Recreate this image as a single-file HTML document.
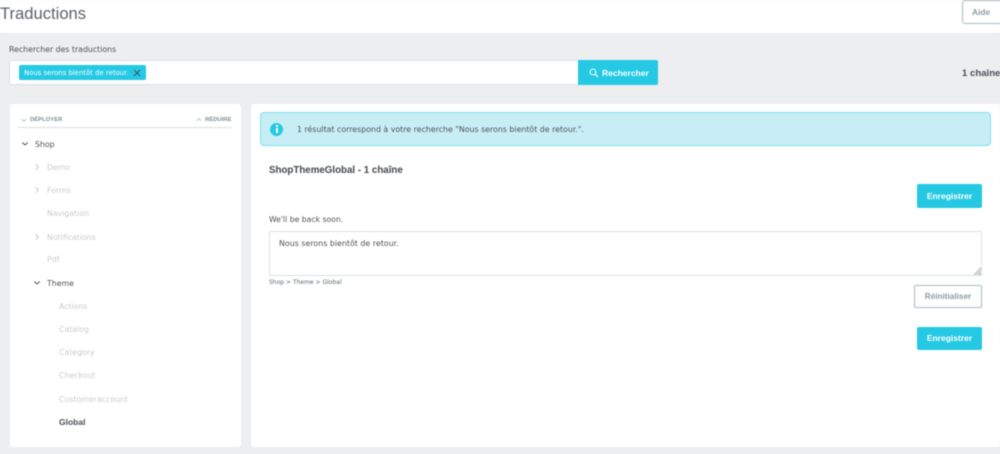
<!DOCTYPE html>
<html lang="fr">
<head>
<meta charset="utf-8">
<title>Traductions</title>
<style>
html,body{margin:0;padding:0}
body{width:1000px;height:454px;overflow:hidden;background:#eceef0;position:relative;font-family:"DejaVu Sans","Liberation Sans",sans-serif;color:#363a41}
div,span,svg{position:absolute;box-sizing:border-box}
.t{white-space:nowrap;line-height:14px;font-size:7.8px}
.b{font-family:"Liberation Sans",sans-serif;font-weight:bold}
.dim{color:#c9cbce}
.btn{background:#25c9e3;border-radius:2px;color:#fff;font-family:"Liberation Sans",sans-serif;font-weight:bold;font-size:8.5px;text-align:center}
#root{left:0;top:0;width:1000px;height:454px;filter:blur(.45px)}
</style>
</head>
<body>
<div id="root">
<div style="left:0;top:0;width:1000px;height:33px;background:#fff"></div>
<div class="t" style="left:0;top:2px;font:16.6px/24px 'Liberation Sans',sans-serif;color:#5c6268">Traductions</div>
<div style="left:962px;top:0;width:46px;height:24px;border:1px solid #a9bbc2;border-radius:3px;background:#fff"></div>
<div class="t b" style="left:972px;top:5px;font-size:8.4px;color:#8a9ca5">Aide</div>

<div class="t" style="left:9px;top:43px;color:#4d5257">Rechercher des traductions</div>
<div style="left:9px;top:60px;width:570px;height:25px;background:#fff;border:1px solid #d8e2e6;border-radius:2px 0 0 2px"></div>
<div style="left:19px;top:65px;width:127px;height:15px;background:#25c9e3;border-radius:2px"></div>
<div class="t" style="left:24px;top:66px;font-size:6.9px;color:#fff">Nous serons bientôt de retour.</div>
<svg style="left:133px;top:69px" width="8" height="8" viewBox="0 0 8 8"><path d="M1 1L7 7M7 1L1 7" stroke="#37525e" stroke-width=".9" fill="none"/></svg>
<div style="left:578px;top:60px;width:80px;height:25px;background:#25c9e3;border-radius:0 2px 2px 0"></div>
<svg style="left:589px;top:68px" width="10" height="10" viewBox="0 0 10 10"><circle cx="4" cy="4" r="2.9" stroke="#fff" stroke-width="1" fill="none"/><path d="M6.2 6.2L9 9" stroke="#fff" stroke-width="1.2"/></svg>
<div class="t b" style="left:602px;top:66px;font-size:8.5px;color:#fff">Rechercher</div>
<div class="t b" style="left:962px;top:67px;font-size:9.6px;color:#4a4f55">1 chaîne</div>

<div style="left:10px;top:104px;width:231px;height:343px;background:#fff;border-radius:3px"></div>
<svg style="left:21px;top:118px" width="6" height="5" viewBox="0 0 6 5"><path d="M.8 1.2L3 3.4L5.2 1.2" stroke="#a9b6bc" stroke-width=".8" fill="none"/></svg>
<div class="t b" style="left:30px;top:113px;font-size:5.9px;color:#7d8f97">DÉPLOYER</div>
<svg style="left:196px;top:117px" width="6" height="5" viewBox="0 0 6 5"><path d="M.8 3.8L3 1.6L5.2 3.8" stroke="#a9b6bc" stroke-width=".8" fill="none"/></svg>
<div class="t b" style="left:205px;top:113px;font-size:5.9px;color:#7d8f97">RÉDUIRE</div>
<div style="left:18px;top:127px;width:214px;height:1px;background:#d8e2e6"></div>

<svg style="left:21px;top:141px" width="8" height="6" viewBox="0 0 8 6"><path d="M1.3 1.5L4 4L6.7 1.5" stroke="#4d5257" stroke-width=".9" fill="none"/></svg>
<div class="t" style="left:35px;top:138px;color:#4d5257">Shop</div>

<svg style="left:34px;top:163px" width="6" height="8" viewBox="0 0 6 8"><path d="M1.8 1.2L4.3 4L1.8 6.8" stroke="#c0c3c6" stroke-width=".9" fill="none"/></svg>
<div class="t dim" style="left:47px;top:161px">Demo</div>
<svg style="left:34px;top:186px" width="6" height="8" viewBox="0 0 6 8"><path d="M1.8 1.2L4.3 4L1.8 6.8" stroke="#c0c3c6" stroke-width=".9" fill="none"/></svg>
<div class="t dim" style="left:47px;top:184px">Forms</div>
<div class="t dim" style="left:47px;top:207px">Navigation</div>
<svg style="left:34px;top:233px" width="6" height="8" viewBox="0 0 6 8"><path d="M1.8 1.2L4.3 4L1.8 6.8" stroke="#c0c3c6" stroke-width=".9" fill="none"/></svg>
<div class="t dim" style="left:47px;top:231px">Notifications</div>
<div class="t dim" style="left:47px;top:253px">Pdf</div>
<svg style="left:33px;top:280px" width="8" height="6" viewBox="0 0 8 6"><path d="M1.3 1.5L4 4L6.7 1.5" stroke="#4d5257" stroke-width=".9" fill="none"/></svg>
<div class="t" style="left:47px;top:277px;color:#4d5257">Theme</div>
<div class="t dim" style="left:59px;top:300px">Actions</div>
<div class="t dim" style="left:59px;top:323px">Catalog</div>
<div class="t dim" style="left:59px;top:346px">Category</div>
<div class="t dim" style="left:59px;top:369px">Checkout</div>
<div class="t dim" style="left:59px;top:393px">Customeraccount</div>
<div class="t b" style="left:59px;top:415px;font-size:8.5px;color:#4a4f55">Global</div>

<div style="left:251px;top:104px;width:749px;height:343px;background:#fff;border-radius:3px 0 0 3px"></div>
<div style="left:260px;top:112px;width:731px;height:34px;background:#c7eef5;border:1px solid #7fdfee;border-radius:4px"></div>
<div style="left:270px;top:123px;width:13px;height:13px;background:#25c9e3;border-radius:50%"></div>
<div style="left:276px;top:125px;width:1.5px;height:1.5px;background:#fff"></div>
<div style="left:276px;top:128px;width:1.5px;height:5px;background:#fff"></div>
<div class="t" style="left:297px;top:123px;font-size:7.85px;color:#4d5257">1 résultat correspond à votre recherche "Nous serons bientôt de retour.".</div>

<div class="t b" style="left:269px;top:164px;font-size:9.75px;color:#43474c">ShopThemeGlobal - 1 chaîne</div>
<div class="btn" style="left:917px;top:184px;width:65px;height:24px;line-height:24px">Enregistrer</div>
<div class="t" style="left:269px;top:213px;font-size:7.7px;color:#4d5257">We'll be back soon.</div>
<div style="left:269px;top:231px;width:713px;height:45px;background:#fff;border:1px solid #d8e2e6;border-radius:2px"></div>
<div class="t" style="left:279px;top:237px;font-size:7.9px;color:#4d5257">Nous serons bientôt de retour.</div>
<svg style="left:973px;top:267px" width="8" height="8" viewBox="0 0 8 8"><path d="M1 8L8 1M4 8L8 4M6.5 8L8 6.5" stroke="#a5a9ad" stroke-width="1" fill="none"/></svg>
<div class="t" style="left:269px;top:276px;font-size:6px;color:#62676c">Shop &gt; Theme &gt; Global</div>
<div class="b" style="left:914px;top:285px;width:68px;height:23px;background:#fff;border:1px solid #a9bbc2;border-radius:2px;color:#8a9ca5;font-size:8.2px;line-height:22px;text-align:center">Réinitialiser</div>
<div class="btn" style="left:917px;top:327px;width:65px;height:23px;line-height:23px">Enregistrer</div>
</div>
</body>
</html>
